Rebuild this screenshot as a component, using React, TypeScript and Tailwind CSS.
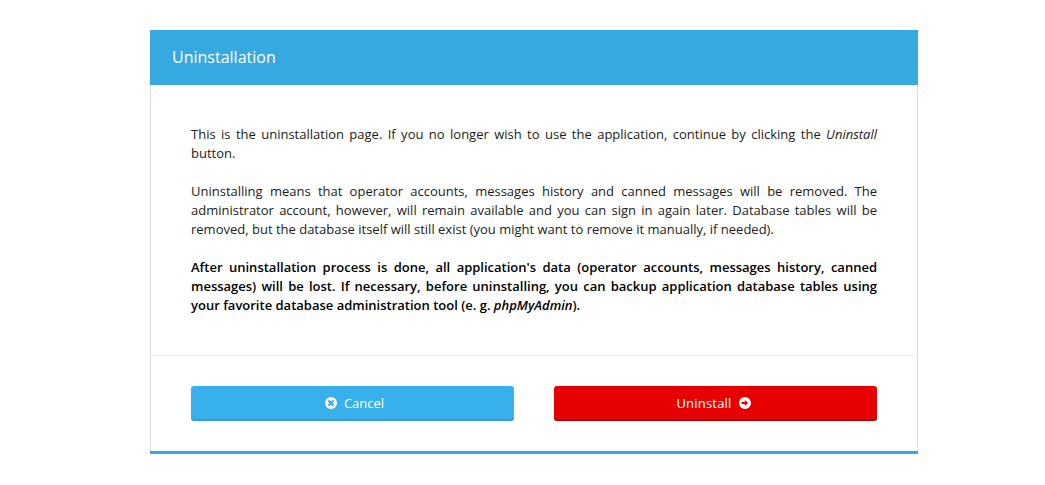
function CancelIcon() {
  return (
    <svg className="mb-0.5 size-3 shrink-0" viewBox="0 0 12 12" aria-hidden="true">
      <circle cx="6" cy="6" r="6" fill="currentColor" />
      <path d="m3.5 3.5 5 5m0-5-5 5" fill="none" stroke="#37b0ec" strokeWidth="2.3" />
    </svg>
  );
}

function ArrowIcon() {
  return (
    <svg className="mb-0.5 size-3 shrink-0" viewBox="0 0 12 12" aria-hidden="true">
      <circle cx="6" cy="6" r="6" fill="currentColor" />
      <path d="M2.6 5h3.2V3L9.2 6 5.8 9V7H2.6Z" fill="#e60000" />
    </svg>
  );
}

export default function App() {
  return (
    <main className="flex h-[485px] justify-center bg-white pt-[30px] pl-[23px] font-['Open_Sans',sans-serif] text-[13px] leading-[19px] text-black">
      <section className="flex h-[424px] w-[768px] flex-col border-b-[3px] border-[#36a9e1]">
        <header className="flex h-[55px] items-center bg-[#36a9e1] px-[22px] pb-0.5 text-base text-white">Uninstallation</header>
        <div className="flex flex-1 flex-col border-x border-[#dddddd]">
          <div className="flex h-[271px] flex-col gap-[19px] border-b border-[#eeeeee] px-10 pt-10 text-justify">
            <p className="text-[#1c1c1c]">This is the uninstallation page. If you no longer wish to use the application, continue by clicking the <em>Uninstall</em> button.</p>
            <p className="text-[#1c1c1c]">Uninstalling means that operator accounts, messages history and canned messages will be removed. The administrator account, however, will remain available and you can sign in again later. Database tables will be removed, but the database itself will still exist (you might want to remove it manually, if needed).</p>
            <p className="font-semibold">After uninstallation process is done, all application's data (operator accounts, messages history, canned messages) will be lost. If necessary, before uninstalling, you can backup application database tables using your favorite database administration tool (e. g. <em>phpMyAdmin</em>).</p>
          </div>
          <div className="grid grid-cols-2 gap-10 px-10 pt-[30px] text-white">
            <button className="flex h-[35px] items-center justify-center gap-[7px] rounded-[3px] border-b-2 border-[#359fd4] bg-[#37b0ec] pt-0.5 pl-1"><CancelIcon />Cancel</button>
            <button className="flex h-[35px] items-center justify-center gap-[7px] rounded-[3px] border-b-2 border-[#b00000] bg-[#e60000] pt-0.5 pr-1"><span className="tracking-[0.2px]">Uninstall</span><ArrowIcon /></button>
          </div>
        </div>
      </section>
    </main>
  );
}
